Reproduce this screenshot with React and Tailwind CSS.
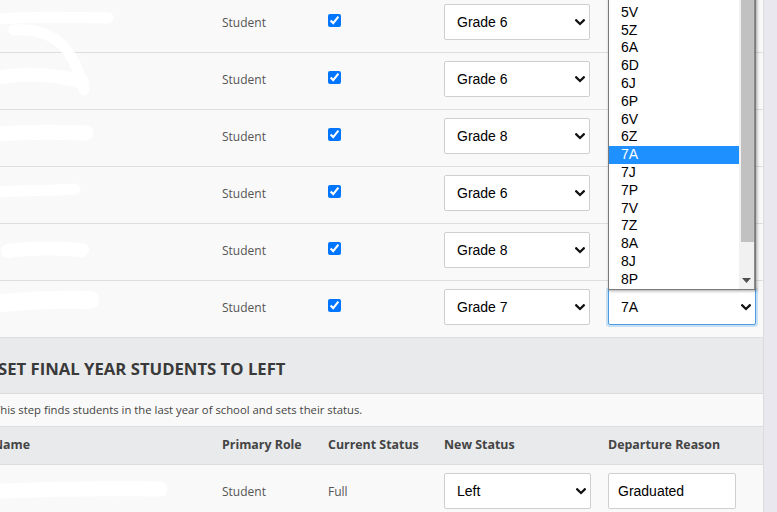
import React from "react";

const COLS = "grid grid-cols-[231px_106px_116px_164px_168px]";

function Chevron() {
  return (
    <svg width="10" height="7" viewBox="0 0 10 7" className="shrink-0">
      <path d="M1.2 1.3 L5 5 L8.8 1.3" fill="none" stroke="#111" strokeWidth="2.3" strokeLinecap="square" />
    </svg>
  );
}

function FakeSelect({ value, wide, focus }) {
  return (
    <div
      className={
        (wide ? "w-[148px] " : "w-[146px] ") +
        (focus
          ? "border-[#4c9be0] shadow-[0_0_0_2px_rgba(102,175,233,0.35)] "
          : "border-[#cfcfcf] ") +
        "flex items-center justify-between h-[36px] bg-white border rounded-[2px] pl-[12px] pr-[4px] font-['Liberation_Sans',Arial,sans-serif] text-[14px] text-black"
      }
    >
      <span>{value}</span>
      <Chevron />
    </div>
  );
}

const grades = ["Grade 6", "Grade 6", "Grade 8", "Grade 6", "Grade 8", "Grade 7"];
const options = ["5P", "5V", "5Z", "6A", "6D", "6J", "6P", "6V", "6Z", "7A", "7J", "7P", "7V", "7Z", "8A", "8J", "8P"];

function UpperRow({ grade, last }) {
  return (
    <div className={COLS + " h-[57px] border-b border-[#dedede] bg-[#f9f9f9] items-center pb-[4px]"}>
      <div className="px-3" />
      <div className="px-3 text-[12px] text-[#555] mt-[2px]">Student</div>
      <div className="px-3 flex items-center">
        <input type="checkbox" checked readOnly className="w-[13px] h-[13px] m-0 -mt-[4px] accent-[#0075ff]" />
      </div>
      <div className="px-3">
        <FakeSelect value={grade} />
      </div>
      <div className="px-3">
        <FakeSelect value={last ? "7A" : ""} wide focus={last} />
      </div>
    </div>
  );
}

function Dropdown() {
  return (
    <div className="absolute left-[608px] top-[-15px] w-[148px] flex bg-white border border-[#7a7a7a] shadow-[1px_1px_3px_rgba(0,0,0,0.35)] z-10">
      <div className="flex-1 flex flex-col font-['Liberation_Sans',Arial,sans-serif] text-[14px]">
        {options.map((o) => (
          <div
            key={o}
            className={
              (o === "7A" ? "bg-[#1e90ff] text-white " : "text-black ") +
              "h-[17.8px] leading-[17.8px] pl-[12px]"
            }
          >
            {o}
          </div>
        ))}
      </div>
      <div className="w-[16px] bg-[#f1f1f1] relative border-r border-[#8a8a8a]">
        <div className="absolute left-[2px] right-[0px] top-0 h-[256px] bg-[#c1c1c1]" />
        <svg className="absolute left-[3px] bottom-[6px]" width="9" height="5" viewBox="0 0 9 5">
          <path d="M0 0 H9 L4.5 5 Z" fill="#505050" />
        </svg>
      </div>
    </div>
  );
}

function Scribbles() {
  return (
    <svg className="absolute left-0 top-0 pointer-events-none" width="200" height="512" viewBox="0 0 200 512">
      <g fill="none" stroke="#ffffff" strokeLinecap="round" strokeLinejoin="round">
        <path d="M2 19 C30 16 70 17 108 18" strokeWidth="11" />
        <path d="M14 30 C40 28 60 38 70 55 C78 68 82 80 84 90" strokeWidth="11" />
        <path d="M3 77 C25 73 55 74 82 82" strokeWidth="14" />
        <path d="M2 134 C30 131 60 132 86 133" strokeWidth="15" />
        <path d="M0 192 C25 190 50 191 75 189" strokeWidth="11" />
        <path d="M8 251 C30 248 55 248 82 250" strokeWidth="14" />
        <path d="M0 303 C30 300 60 299 90 300" strokeWidth="18" />
        <path d="M3 491 C50 489 100 488 160 489" strokeWidth="15" />
      </g>
    </svg>
  );
}

export default function App() {
  return (
    <div className="relative w-[777px] h-[512px] overflow-hidden bg-[#e8e8ee] font-['Open_Sans',sans-serif]">
      <div className="w-[785px] ml-[-21px] mt-[-4px] border-r border-[#dcdcdc]">
        {grades.map((g, i) => (
          <UpperRow key={i} grade={g} last={i === 5} />
        ))}
        <div className="h-[56px] bg-[#e9eaec] border-b border-[#dcdcdc] flex items-center pl-[19px] pt-[6px]">
          <span className="text-[16.7px] font-bold text-[#3a3a3a] whitespace-nowrap">SET FINAL YEAR STUDENTS TO LEFT</span>
        </div>
        <div className="h-[33px] bg-[#f9f9f9] border-b border-[#dedede] flex items-center pl-[15px]">
          <span className="text-[11.3px] text-[#444] whitespace-nowrap">This step finds students in the last year of school and sets their status.</span>
        </div>
        <div className={COLS + " h-[38px] bg-[#e9eaec] border-b border-[#dcdcdc] items-center text-[12.4px] font-bold text-[#444] whitespace-nowrap"}>
          <div className="pl-[14px] pr-3">Name</div>
          <div className="px-3">Primary Role</div>
          <div className="px-3">Current Status</div>
          <div className="px-3">New Status</div>
          <div className="px-3">Departure Reason</div>
        </div>
        <div className={COLS + " h-[60px] bg-[#f9f9f9] items-start pt-[8px]"}>
          <div className="px-3" />
          <div className="px-3 text-[12px] text-[#555] mt-[10px]">Student</div>
          <div className="px-3 text-[12px] text-[#555] mt-[10px]">Full</div>
          <div className="px-3">
            <div className="w-[147px] flex items-center justify-between h-[36px] bg-white border border-[#cfcfcf] rounded-[2px] pl-[12px] pr-[4px] font-['Liberation_Sans',Arial,sans-serif] text-[14px] text-black">
              <span>Left</span>
              <Chevron />
            </div>
          </div>
          <div className="px-3">
            <div className="w-[128px] flex items-center h-[36px] bg-white border border-[#cfcfcf] rounded-[2px] pl-[9px] font-['Liberation_Sans',Arial,sans-serif] text-[14px] text-black">
              Graduated
            </div>
          </div>
        </div>
      </div>
      <Scribbles />
      <Dropdown />
    </div>
  );
}
